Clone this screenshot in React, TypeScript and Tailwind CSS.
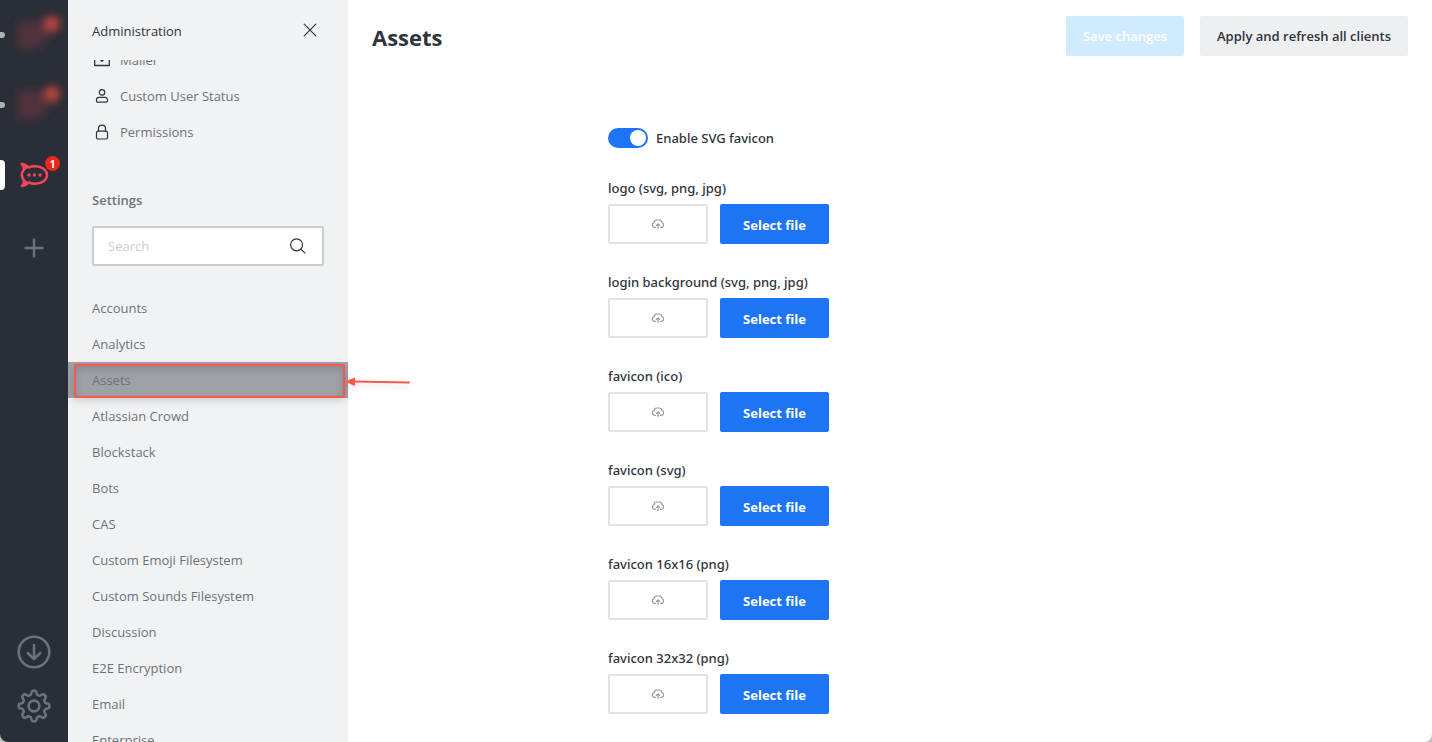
import React from 'react';

const settingsGroups = [
  'Accounts',
  'Analytics',
  'Assets',
  'Atlassian Crowd',
  'Blockstack',
  'Bots',
  'CAS',
  'Custom Emoji Filesystem',
  'Custom Sounds Filesystem',
  'Discussion',
  'E2E Encryption',
  'Email',
  'Enterprise',
];

const assetFields = [
  'logo (svg, png, jpg)',
  'login background (svg, png, jpg)',
  'favicon (ico)',
  'favicon (svg)',
  'favicon 16x16 (png)',
  'favicon 32x32 (png)',
];

const stroke = {
  fill: 'none',
  stroke: 'currentColor',
  strokeLinecap: 'round',
  strokeLinejoin: 'round',
} as const;

function MailerIcon() {
  return (
    <svg viewBox="0 0 20 20" className="size-5" {...stroke} strokeWidth="1.3">
      <path d="M5 6.5H2.7v9h14.6v-9H15" />
      <path d="M10 4v7M7.6 8.8 10 11.2l2.4-2.4" />
    </svg>
  );
}

function UserIcon() {
  return (
    <svg viewBox="0 0 20 20" className="size-5" {...stroke} strokeWidth="1.2">
      <circle cx="10" cy="6.4" r="2.7" />
      <path d="M7 11.4h6a2.5 2.5 0 0 1 2.5 2.5V15c0 .7-.5 1.2-1.2 1.2H5.700c-.7 0-1.200-.5-1.200-1.200v-1.100a2.500 2.500 0 0 1 2.500-2.500Z" />
    </svg>
  );
}

function LockIcon() {
  return (
    <svg viewBox="0 0 20 20" className="size-5" {...stroke} strokeWidth="1.2">
      <path d="M6.5 9.2V6.6a3.5 3.5 0 0 1 7 0v2.6" />
      <rect x="4.5" y="9.2" width="11" height="7.8" rx="1.6" />
    </svg>
  );
}

function CloudUploadIcon() {
  return (
    <svg viewBox="0 0 14 12" className="h-3 w-3.5" {...stroke} strokeWidth="1.2">
      <path d="M4.600 9.300H3.600a2.400 2.400 0 0 1-.5-4.700C3.200 3.200 4.400 2 5.900 2h2.200c1.500 0 2.700 1.200 2.800 2.600a2.400 2.400 0 0 1-.5 4.700H9.400" />
      <path d="M7 10.600V6M5.400 7.400 7 5.800l1.600 1.600" />
    </svg>
  );
}

function RocketIcon() {
  return (
    <svg viewBox="0 0 30 26" className="h-[26px] w-[30px]" {...stroke} strokeWidth="2.5">
      <path d="M9.600 5.500C11.400 4.700 13.500 4.300 16 4.300c6.800 0 12 3.900 12 8.700s-5.200 8.700-12 8.700c-2.500 0-4.600-.4-6.400-1.200-1.700 2-3.800 3.300-6.600 3.600 1.500-1.900 2.300-3.900 1.800-5.900-2.400-3.100-2.400-7.300 0-10.400C5.300 5.800 4.500 3.800 2.700 2 5.500 2.200 7.900 3.500 9.600 5.500Z" />
      <path d="M1.800 1.400c3.400 0 6.200 1.400 8 3.800L5.200 8.400C5 5.800 3.900 3.300 1.800 1.400Z" fill="currentColor" stroke="none" />
      <path d="M1.800 24.600c3.400 0 6.200-1.400 8-3.800l-4.600-3.200c0 2.600-1.300 5.100-3.400 7Z" fill="currentColor" stroke="none" />
      <g fill="currentColor" stroke="none">
        <circle cx="10" cy="13" r="1.700" />
        <circle cx="15.500" cy="13" r="1.700" />
        <circle cx="21" cy="13" r="1.700" />
      </g>
    </svg>
  );
}

function GearIcon() {
  const points: string[] = [];
  const steps = 96;
  for (let i = 0; i < steps; i++) {
    const angle = (i / steps) * Math.PI * 2;
    const wave = Math.tanh(2.2 * Math.cos(angle * 8)) / Math.tanh(2.2);
    const radius = 13.4 + 1.9 * wave;
    points.push(`${(17 + radius * Math.sin(angle)).toFixed(2)},${(17 - radius * Math.cos(angle)).toFixed(2)}`);
  }
  return (
    <svg viewBox="0 0 34 34" className="size-[34px]" {...stroke} strokeWidth="2.6">
      <polygon points={points.join(' ')} />
      <circle cx="17" cy="17" r="5.4" />
    </svg>
  );
}

function BlurredServer() {
  return (
    <button type="button" aria-label="Workspace" className="relative flex h-[70px] w-full items-center justify-center">
      <span className="absolute left-0 h-1.5 w-[5px] rounded-r-full bg-[#b0b2b5]" />
      <span className="h-7 w-8 rounded-[4px_4px_20px_4px] bg-[#f5455c]/20 blur-[4px]" />
      <span className="absolute top-4 right-2 size-4 rounded-full bg-[#db4a42]/85 blur-[4px]" />
    </button>
  );
}

function ServerRail() {
  return (
    <nav aria-label="Workspaces" className="flex w-[68px] shrink-0 flex-col rounded-bl-lg bg-[#2a2e36] pb-[19px]">
      <BlurredServer />
      <BlurredServer />
      <button type="button" aria-label="Current workspace" className="relative flex h-[70px] w-full items-center justify-center text-[#f5455c]">
        <span className="absolute left-0 h-[30px] w-[5px] rounded-r bg-white" />
        <RocketIcon />
        <span className="absolute top-4 right-2 flex size-[15px] items-center justify-center rounded-full bg-[#e8281e] text-[10px] leading-none font-bold text-white">
          1
        </span>
      </button>
      <button type="button" aria-label="Add workspace" className="flex h-[76px] w-full items-center justify-center text-[#6c727a]">
        <svg viewBox="0 0 20 20" className="size-5" fill="none" stroke="currentColor" strokeWidth="2.4">
          <path d="M10 .5v19M.5 10h19" />
        </svg>
      </button>
      <div className="mt-auto flex flex-col items-center gap-5 text-[#6c727a]">
        <button type="button" aria-label="Downloads">
          <svg viewBox="0 0 34 34" className="size-[34px]" {...stroke} strokeWidth="2.6">
            <circle cx="17" cy="17" r="15.3" />
            <path d="M17 10v14M10.8 18l6.2 6.2 6.2-6.2" />
          </svg>
        </button>
        <button type="button" aria-label="Settings">
          <GearIcon />
        </button>
      </div>
    </nav>
  );
}

function AdminLink({ icon, label }: { icon: React.ReactNode; label: string }) {
  return (
    <li>
      <a href="#" className="flex h-9 items-center gap-2 px-6 text-[#6c727a]">
        <span className="text-[#2f343d]">{icon}</span>
        <span className="pt-0.5">{label}</span>
      </a>
    </li>
  );
}

function Callout() {
  return (
    <span aria-hidden="true" className="pointer-events-none absolute inset-y-0 left-1.5 flex w-[336px] items-center">
      <span className="mt-0.5 h-[34px] w-[271px] shrink-0 rounded-xs border-2 border-[#f9594b] shadow-[0_3px_8px_rgba(0,0,0,0.15),inset_0_3px_8px_rgba(0,0,0,0.15)]" />
      <svg viewBox="0 0 65 12" className="mt-1 h-3 w-[65px] drop-shadow-md">
        <path d="M8 5.5 64 6.5" stroke="#f9594b" strokeWidth="2" strokeLinecap="round" />
        <path d="M0 5.5 10 1.5v8.4Z" fill="#f9594b" />
      </svg>
    </span>
  );
}

function AdminSidebar() {
  return (
    <aside className="relative z-10 flex w-[280px] shrink-0 flex-col bg-[#f1f2f4]">
      <header className="relative z-10 flex h-[60px] shrink-0 items-center justify-between bg-[#f1f2f4] pr-7 pl-6 text-[#2f343d]">
        <h2 className="pt-[3px]">Administration</h2>
        <button type="button" aria-label="Close" className="flex size-5 items-center justify-center">
          <svg viewBox="0 0 20 20" className="size-5" {...stroke} strokeWidth="1.2">
            <path d="m4.2 4.2 11.6 11.6M15.8 4.2 4.2 15.8" />
          </svg>
        </button>
      </header>
      <ul className="-mt-[18px]">
        <AdminLink icon={<MailerIcon />} label="Mailer" />
        <AdminLink icon={<UserIcon />} label="Custom User Status" />
        <AdminLink icon={<LockIcon />} label="Permissions" />
      </ul>
      <h3 className="mt-10 px-6 leading-5 font-semibold text-[#6c727a]">Settings</h3>
      <label className="mx-6 mt-4 flex h-10 shrink-0 items-center rounded-xs border-2 border-[#cbced1] bg-white px-3.5">
        <input type="search" placeholder="Search" aria-label="Search settings" className="min-w-0 flex-1 pt-0.5 outline-none placeholder:text-[#cbced1]" />
        <svg viewBox="0 0 20 20" className="size-5 text-[#2f343d]" {...stroke} strokeWidth="1.2">
          <circle cx="8.6" cy="8.8" r="6" />
          <path d="m13 13.2 4 4" />
        </svg>
      </label>
      <ul className="mt-6">
        {settingsGroups.map((group) => (
          <li key={group} className="relative">
            <a
              href="#"
              aria-current={group === 'Assets' ? 'page' : undefined}
              className={`flex h-9 items-center px-6 pt-0.5 text-[#6c727a] ${group === 'Assets' ? 'bg-[#9ea2a8]' : ''}`}
            >
              {group}
            </a>
            {group === 'Assets' && <Callout />}
          </li>
        ))}
      </ul>
    </aside>
  );
}

function AssetField({ label }: { label: string }) {
  return (
    <div role="group" aria-label={label}>
      <p className="mb-1.5 leading-5">{label}</p>
      <div className="flex gap-3">
        <div className="flex h-10 w-[100px] items-center justify-center rounded-xs border-2 border-[#e1e3e6] text-[#9a9a9a]">
          <CloudUploadIcon />
        </div>
        <button type="button" className="h-10 w-[109px] rounded-xs bg-[#1d74f5] pt-1 font-['Open_Sans',sans-serif] font-bold text-white">
          Select file
        </button>
      </div>
    </div>
  );
}

export default function App() {
  return (
    <div className="flex h-screen overflow-hidden bg-[#bfc1c3] font-['Open_Sans','Noto_Sans',sans-serif] text-[13px]">
      <ServerRail />
      <AdminSidebar />
      <main className="min-w-0 flex-1 overflow-hidden rounded-br-lg bg-white text-[#2f343d]">
        <header className="flex items-center gap-4 px-6 py-4">
          <h1 className="flex-1 pt-0.5 text-[22px] leading-8 font-bold">Assets</h1>
          <button type="button" disabled className="h-10 rounded-xs bg-[#d1ebfe] px-[17px] pt-0.5 font-semibold text-white">
            Save changes
          </button>
          <button type="button" className="h-10 rounded-xs bg-[#eeeff1] px-[17px] pt-0.5 font-semibold">
            Apply and refresh all clients
          </button>
        </header>
        <form className="mx-auto mt-14 flex w-full max-w-[564px] flex-col gap-7 font-['Noto_Sans','Open_Sans',sans-serif] font-medium">
          <label className="mb-0.5 flex h-5 items-center gap-2 self-start">
            <input
              type="checkbox"
              role="switch"
              defaultChecked
              className="h-5 w-10 appearance-none rounded-full bg-[#cbced1] p-0.5 before:block before:size-4 before:rounded-full before:bg-white checked:bg-[#1d74f5] checked:before:ml-5"
            />
            <span className="pt-0.5">Enable SVG favicon</span>
          </label>
          {assetFields.map((label) => (
            <AssetField key={label} label={label} />
          ))}
        </form>
      </main>
    </div>
  );
}
